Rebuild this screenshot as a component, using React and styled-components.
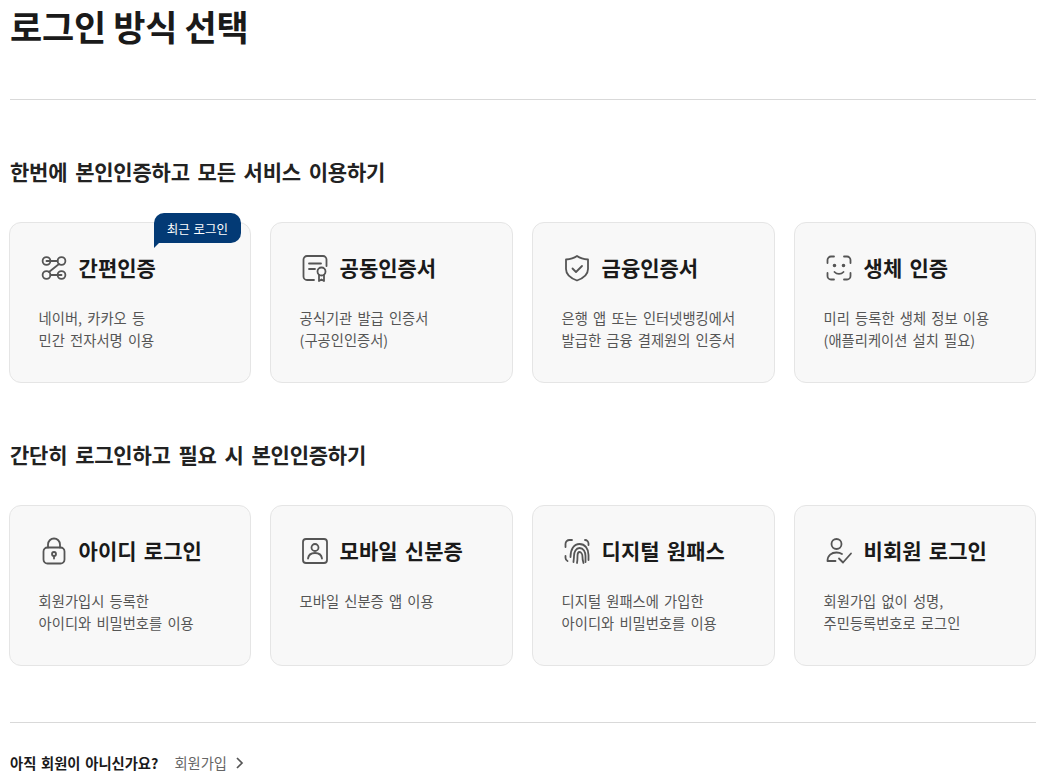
import React from "react";
import styled, { createGlobalStyle } from "styled-components";

const GlobalStyle = createGlobalStyle`
  html, body {
    margin: 0;
    padding: 0;
    background: #fff;
    overflow: hidden;
  }
  body {
    font-family: "Noto Sans CJK KR", "Noto Sans", sans-serif;
    color: #1a1a1a;
  }
`;

const Page = styled.main`
  width: 1027px;
  height: 782px;
  margin-left: 9px;
  overflow: hidden;
`;

const Title = styled.h1`
  margin: 0 0 0 1px;
  height: 99px;
  border-bottom: 1px solid #d9d9d9;
  font-size: 35px;
  line-height: 52px;
  font-weight: 700;
  letter-spacing: -0.2px;
  word-spacing: -0.5px;
`;

const SectionTitle = styled.h2`
  margin: 0 0 0 1px;
  font-size: 21px;
  line-height: 32px;
  font-weight: 700;
  letter-spacing: -0.2px;
  word-spacing: 3.2px;
  color: #222;
`;

const Section = styled.section`
  padding-top: 55px;
`;

const CardGrid = styled.div`
  display: grid;
  grid-template-columns: 242px 243px 243px 242px;
  gap: 19px;
  margin-top: 35px;
`;

const Card = styled.a`
  position: relative;
  box-sizing: border-box;
  height: 161px;
  padding: 25px 28px 0 28.6px;
  background: #f8f8f8;
  border: 1px solid #e5e5e5;
  border-radius: 12px;
`;

const CardHead = styled.div`
  display: flex;
  align-items: center;
  gap: 10px;
  height: 38px;
`;

const IconSvg = styled.svg`
  width: 30px;
  height: 30px;
  margin-top: 2px;
  flex: none;
  fill: none;
  stroke: #555;
  stroke-width: 1.8;
  stroke-linecap: round;
  stroke-linejoin: round;
`;

const CardTitle = styled.strong`
  font-size: 21px;
  line-height: 30px;
  font-weight: 700;
  word-spacing: 2.5px;
  color: #1a1a1a;
`;

const CardDesc = styled.p`
  margin: 21px 0 0;
  font-size: 14.3px;
  line-height: 22.4px;
  word-spacing: 2px;
  color: #555;
  white-space: pre-line;
`;

const RecentBadge = styled.span`
  position: absolute;
  top: -10px;
  right: 9px;
  height: 30px;
  padding: 0 13px;
  display: flex;
  align-items: center;
  background: #033a75;
  color: #fff;
  font-size: 12.5px;
  word-spacing: 1px;
  border-radius: 10px 10px 10px 0;

  &::after {
    content: "";
    position: absolute;
    left: 0;
    top: 29px;
    border-top: 6px solid #033a75;
    border-right: 6px solid transparent;
  }
`;

const Footer = styled.div`
  margin-top: 56px;
  margin-left: 1px;
  border-top: 1px solid #d9d9d9;
  padding-top: 29px;
  display: flex;
  align-items: center;
  font-size: 14.3px;
  line-height: 22px;
  word-spacing: 1.5px;
`;

const FooterQuestion = styled.strong`
  font-weight: 700;
  color: #1a1a1a;
`;

const FooterLink = styled.a`
  display: flex;
  align-items: center;
  gap: 8px;
  margin-left: 16px;
  color: #666;
`;

const Chevron = styled.svg`
  width: 10px;
  height: 12px;
  fill: none;
  stroke: #555;
  stroke-width: 1.7;
`;

const icons = {
  simple: (
    <>
      <circle cx="7.500" cy="8" r="3.900" />
      <circle cx="22.500" cy="8" r="3.900" />
      <circle cx="7.500" cy="22" r="3.900" />
      <circle cx="22.500" cy="22" r="3.900" />
      <path d="M7.500 8h11.100M11.400 22h11.100M20 11L10 19" />
    </>
  ),
  cert: (
    <>
      <path d="M14 27H7a3.500 3.500 0 0 1-3.500-3.500v-17A3.500 3.500 0 0 1 7 3h16a3.500 3.500 0 0 1 3.500 3.500V13" />
      <path d="M9 10.500h12M9 16h6" />
      <circle cx="21.500" cy="18.500" r="4" />
      <path d="M19 22v6l2.500-1.500L24 28v-6" />
    </>
  ),
  shield: (
    <>
      <path d="M15 3c3 2.200 6.500 3.300 11 3.500v9.500c0 5.400-4.600 9.200-11 11.500-6.400-2.300-11-6.100-11-11.500V6.500c4.500-.2 8-1.300 11-3.500z" />
      <path d="M10.500 15.500l3.500 3.500 6-6" />
    </>
  ),
  face: (
    <>
      <path d="M3.500 10V7a3.500 3.500 0 0 1 3.500-3.500h3M20 3.500h3A3.500 3.500 0 0 1 26.500 7v3M3.500 20v3A3.500 3.500 0 0 0 7 26.500h3M20 26.500h3a3.500 3.500 0 0 0 3.500-3.500v-3" />
      <path d="M10.500 19c2.500 2.600 6.500 2.600 9 0" />
      <circle cx="10.500" cy="12.500" r=".9" fill="#555" />
      <circle cx="19.500" cy="12.500" r=".9" fill="#555" />
    </>
  ),
  lock: (
    <>
      <rect x="4.500" y="11.500" width="21" height="16" rx="4" />
      <path d="M9 11.500V8.500a6 6 0 0 1 12 0v3" />
      <circle cx="15" cy="18" r="2" />
      <path d="M15 20v2.500" />
    </>
  ),
  mobile: (
    <>
      <rect x="3" y="3" width="24" height="24" rx="3" />
      <circle cx="15" cy="11.500" r="3.500" />
      <path d="M8 22.500c.5-3.500 3.500-5.500 7-5.500s6.500 2 7 5.500" />
    </>
  ),
  finger: (
    <>
      <path d="M3.500 11V8a4 4 0 0 1 4-4h2.500M3.500 20v2a3.500 3.500 0 0 0 2 3M23 4a3.500 3.500 0 0 1 3.500 3.500V9" />
      <path d="M8.500 21c0-8 3.500-13 9-13s9 4.500 9 11v5" />
      <path d="M11.500 26c0-2 .5-3 .5-6 0-4 2-8 5.500-8 4 0 6 4 6 8v6" />
      <path d="M15 27c.5-2 .5-4 .5-7 0-2 .5-4 2-4s3 2 3 5 .5 4 1 6" />
    </>
  ),
  guest: (
    <>
      <circle cx="12.500" cy="8" r="5" />
      <path d="M3.500 25c0-5.500 4-8.500 9-8.500 2 0 4 .5 5.500 1.500M3.500 25h8" />
      <path d="M15 22.500l4 4 8-9" />
    </>
  ),
};

const Icon = ({ name }) => <IconSvg viewBox="0 0 30 30">{icons[name]}</IconSvg>;

const quickCards = [
  { icon: "simple", title: "간편인증", desc: "네이버, 카카오 등\n민간 전자서명 이용", recent: true },
  { icon: "cert", title: "공동인증서", desc: "공식기관 발급 인증서\n(구공인인증서)" },
  { icon: "shield", title: "금융인증서", desc: "은행 앱 또는 인터넷뱅킹에서\n발급한 금융 결제원의 인증서" },
  { icon: "face", title: "생체 인증", desc: "미리 등록한 생체 정보 이용\n(애플리케이션 설치 필요)" },
];

const loginCards = [
  { icon: "lock", title: "아이디 로그인", desc: "회원가입시 등록한\n아이디와 비밀번호를 이용" },
  { icon: "mobile", title: "모바일 신분증", desc: "모바일 신분증 앱 이용" },
  { icon: "finger", title: "디지털 원패스", desc: "디지털 원패스에 가입한\n아이디와 비밀번호를 이용" },
  { icon: "guest", title: "비회원 로그인", desc: "회원가입 없이 성명,\n주민등록번호로 로그인" },
];

const CardList = ({ items }) => (
  <CardGrid>
    {items.map((item) => (
      <Card key={item.title}>
        {item.recent && <RecentBadge>최근 로그인</RecentBadge>}
        <CardHead>
          <Icon name={item.icon} />
          <CardTitle>{item.title}</CardTitle>
        </CardHead>
        <CardDesc>{item.desc}</CardDesc>
      </Card>
    ))}
  </CardGrid>
);

const App = () => (
  <Page>
    <GlobalStyle />
    <Title>로그인 방식 선택</Title>
    <Section>
      <SectionTitle>한번에 본인인증하고 모든 서비스 이용하기</SectionTitle>
      <CardList items={quickCards} />
    </Section>
    <Section>
      <SectionTitle>간단히 로그인하고 필요 시 본인인증하기</SectionTitle>
      <CardList items={loginCards} />
    </Section>
    <Footer>
      <FooterQuestion>아직 회원이 아니신가요?</FooterQuestion>
      <FooterLink>
        회원가입
        <Chevron viewBox="0 0 10 12">
          <path d="M2 1l5 5-5 5" />
        </Chevron>
      </FooterLink>
    </Footer>
  </Page>
);

export default App;
